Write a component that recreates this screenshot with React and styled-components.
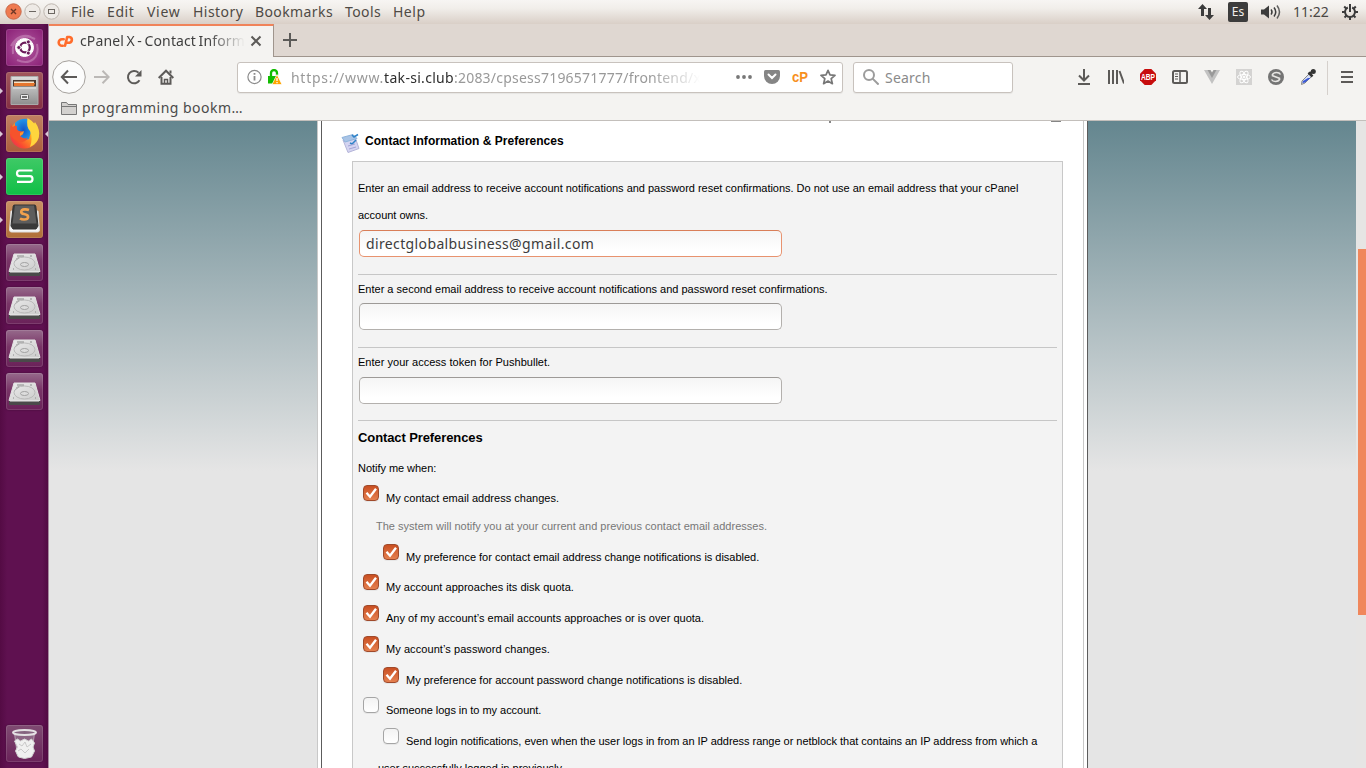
import React from "react";
import styled, { createGlobalStyle } from "styled-components";

const Global = createGlobalStyle`
  * { box-sizing: border-box; }
  body { margin: 0; overflow: hidden; background: #e5e5e5; }
  svg { display: block; flex: none; }
`;

const uiFont = `"Noto Sans", "Open Sans", sans-serif`;
const pageFont = `"Liberation Sans", Arial, sans-serif`;

const Desktop = styled.div`
  width: 1366px;
  height: 768px;
  display: flex;
  flex-direction: column;
  overflow: hidden;
  font-family: ${uiFont};
  font-size: 14px;
  color: #4a4744;
`;

const TopPanel = styled.header`
  height: 24px;
  flex: none;
  display: flex;
  align-items: center;
  justify-content: space-between;
  padding: 0 8px 0 5px;
  background: linear-gradient(#f7f5f3, #f1eeea 35%, #d9cfc7);
`;

const Group = styled.div`
  display: flex;
  align-items: center;
  gap: ${(p) => p.$gap || 0}px;
`;

const Menus = styled.div`
  display: flex;
  padding-left: 11px;
`;

const MenuItem = styled.span`
  width: ${(p) => p.$w}px;
  line-height: 22px;
  letter-spacing: ${(p) => p.$ls || 0}px;
  white-space: nowrap;
  color: #4f4a45;
`;

const Status = styled.div`
  display: flex;
  align-items: center;
  gap: 13px;
  padding-left: 13px;
`;

const Clock = styled.span`
  width: 36px;
  margin-left: -1px;
  line-height: 22px;
  letter-spacing: 0;
  white-space: nowrap;
`;

const Lang = styled.span`
  width: 20px;
  height: 20px;
  border-radius: 2px;
  background: #3c3c3c;
  color: #f1eeea;
  font-size: 12px;
  line-height: 20px;
  text-align: center;
`;

const Body = styled.div`
  flex: 1;
  min-height: 0;
  display: flex;
`;

const Launcher = styled.nav`
  width: 49px;
  flex: none;
  display: flex;
  flex-direction: column;
  gap: 6px;
  padding: 5px 0 6px;
  background: linear-gradient(90deg, #540b44, #5f1150 15%, #5f1150 88%, #520a43);
  border-right: 1px solid #a78aa0;
`;

const Slot = styled.div`
  display: flex;
  align-items: center;
  justify-content: space-between;
  height: 37px;
  ${(p) => p.$last && "margin-top: auto;"}
`;

const Pip = styled.i`
  width: 3px;
  border: 3px solid transparent;
  border-${(p) => p.$side}-width: 3px;
  border-${(p) => (p.$side === "left" ? "right" : "left")}-width: 0;
  border-${(p) => p.$side}-color: ${(p) => (p.$on ? "#d9c9d6" : "transparent")};
`;

const Tile = styled.div`
  width: 37px;
  height: 37px;
  border-radius: 3px;
  background: ${(p) => p.$bg};
  box-shadow: inset 0 0 0 1px rgba(255, 255, 255, 0.12), 0 0 2px rgba(0, 0, 0, 0.35);
`;

const Browser = styled.main`
  flex: 1;
  min-width: 0;
  display: flex;
  flex-direction: column;
  background: #f4f3f1;
`;

const TabStrip = styled.div`
  height: 33px;
  flex: none;
  display: flex;
  background: #dfd7d1;
  box-shadow: inset 0 -1px 0 #9f958d;
`;

const Tab = styled.div`
  width: 225px;
  display: flex;
  align-items: center;
  padding: 0 11px 1px 8px;
  background: #f4f3f1;
  border-top: 2px solid #f0835a;
  border-right: 1px solid #9f958d;
`;

const TabTitle = styled.span`
  flex: 1;
  margin: 0 5px 0 6px;
  overflow: hidden;
  white-space: nowrap;
  line-height: 24px;
  letter-spacing: 0.12px;
  word-spacing: -1.2px;
  color: #3f3f3f;
  mask-image: linear-gradient(90deg, #000 78%, transparent);
`;

const NewTab = styled.div`
  width: 32px;
  display: grid;
  place-items: center;
  padding-bottom: 1px;
`;

const Toolbar = styled.div`
  height: 41px;
  flex: none;
  display: flex;
  align-items: center;
  padding: 0 3px;
`;

const IconCell = styled.div`
  width: ${(p) => p.$w || 32}px;
  height: 40px;
  display: grid;
  place-items: center;
  padding-bottom: 1px;
`;

const Field = styled.div`
  width: ${(p) => p.$w}px;
  height: 31px;
  margin-left: ${(p) => p.$ml}px;
  display: flex;
  align-items: center;
  padding: 0 6px 1px 9px;
  background: #fff;
  border: 1px solid #c8c2bd;
  border-radius: 3px;
  box-shadow: 0 1px 1px rgba(0, 0, 0, 0.06);
`;

const Url = styled.span`
  flex: 1;
  min-width: 0;
  margin: 0 36px 0 8px;
  padding-top: 1px;
  overflow: hidden;
  white-space: nowrap;
  letter-spacing: 0.22px;
  line-height: 26px;
  color: #999;
  mask-image: linear-gradient(90deg, #000 88%, transparent);
  b { font-weight: 400; color: #2e2e2e; letter-spacing: 0.3px; }
`;

const Scheme = styled.span`
  letter-spacing: 0.72px;
`;

const SearchHint = styled.span`
  margin-left: 6px;
  padding-top: 1px;
  letter-spacing: 0.2px;
  color: #8a8a8a;
`;

const Divider = styled.div`
  width: 1px;
  height: 34px;
  margin: 0 3px;
  background: #d5d0cc;
`;

const Bookmarks = styled.div`
  height: 23px;
  flex: none;
  display: flex;
  align-items: center;
  gap: 5px;
  padding: 0 0 3px 12px;
  letter-spacing: 0.48px;
  line-height: 19px;
  border-bottom: 1px solid #c3bfbb;
  color: #4a4a4a;
`;

const Viewport = styled.section`
  flex: 1;
  min-height: 0;
  display: flex;
  overflow: hidden;
  background: #e5e5e5;
`;

const Backdrop = styled.div`
  width: 1307px;
  height: 647px;
  display: flex;
  justify-content: center;
  background: linear-gradient(#64868f, #e5e5e5 350px);
`;

const Scroll = styled.div`
  width: 10px;
  padding: 128px 0 0 2px;
  background: #e6e5e4;
`;

const Thumb = styled.div`
  height: 366px;
  background: #f0875c;
`;

const Frame = styled.div`
  width: 771px;
  height: 647px;
  padding: 0 3px;
  background: #fff;
  border-left: 1px solid #c8c8c8;
  border-right: 1px solid #5c5c5c;
`;

const Sheet = styled.div`
  height: 647px;
  padding: 0 20px 0 19px;
  border-left: 1px solid #5c5c5c;
  border-right: 1px solid #c8c8c8;
  font-family: ${pageFont};
  font-size: 11px;
  color: #000;
`;

const Cut = styled.div`
  height: 3px;
  display: flex;
  justify-content: flex-end;
  align-items: flex-start;
  gap: 220px;
  padding-right: 2px;
`;

const CutMark = styled.i`
  width: ${(p) => p.$w}px;
  height: ${(p) => p.$h}px;
  background: #858585;
`;

const Heading = styled.div`
  height: 37px;
  display: flex;
  align-items: center;
  gap: 5px;
  font-size: 12px;
  font-weight: 700;
  letter-spacing: 0.02px;
  span { padding-bottom: 4px; }
`;

const Panel = styled.div`
  height: 620px;
  margin-left: 11px;
  padding: 13px 5px 0;
  background: #f3f3f3;
  border: 1px solid #c8c8c8;
`;

const Prompt = styled.div`
  line-height: ${(p) => p.$lh}px;
  letter-spacing: ${(p) => p.$ls || 0}px;
  white-space: nowrap;
`;

const Input = styled.div`
  width: 423px;
  height: 27px;
  margin: ${(p) => p.$mt || 0}px 0 ${(p) => p.$mb}px 1px;
  padding: 0 6px;
  border: 1px solid ${(p) => (p.$focus ? "#e8936f" : "#b3b0ad")};
  border-top-color: ${(p) => (p.$focus ? "#d97e58" : "#9d9a97")};
  border-radius: 5px;
  background: linear-gradient(#f5f5f5, #fff 80%);
  font-family: ${uiFont};
  font-size: 14px;
  line-height: 25px;
  letter-spacing: 0.37px;
  color: #3c3c3c;
`;

const Rule = styled.div`
  height: 1px;
  background: #c6c6c6;
`;

const SubHead = styled.div`
  height: 34px;
  font-size: 13px;
  font-weight: 700;
  line-height: 34px;
  letter-spacing: -0.1px;
`;

const Notify = styled.div`
  height: 30px;
  line-height: 27px;
  letter-spacing: -0.04px;
`;

const Row = styled.div`
  height: ${(p) => p.$h}px;
  display: flex;
  align-items: flex-start;
  gap: 7px;
  padding-left: ${(p) => (p.$nested ? 25 : 5)}px;
  letter-spacing: ${(p) => p.$ls || 0}px;
  white-space: nowrap;
  span { line-height: 16px; padding-top: 5px; }
`;

const Note = styled.div`
  height: 29px;
  padding-left: 18px;
  line-height: 22px;
  letter-spacing: 0.012px;
  color: #777;
`;

const Box = styled.div`
  width: 16px;
  height: 16px;
  display: grid;
  place-items: center;
  border-radius: 4px;
  border: 1px solid ${(p) => (p.$on ? "#a04a2b" : "#a5a5a5")};
  background: ${(p) => (p.$on ? "linear-gradient(#c94f22, #e5804f)" : "linear-gradient(#f3f3f3, #fff)")};
  box-shadow: 0 1px 0 rgba(0, 0, 0, 0.05);
`;

const Overflow = styled.div`
  padding-left: 20px;
  line-height: 16px;
`;

const Icon = ({ w = 16, h = w, s = "#5c5a58", sw = 2, children, ...rest }) => (
  <svg width={w} height={h} viewBox={`0 0 ${w} ${h}`} fill="none" stroke={s} strokeWidth={sw} {...rest}>
    {children}
  </svg>
);

const CpLogo = ({ color }) => (
  <Icon w={17} h={13} s={color} sw={2.6} strokeLinecap="round" strokeLinejoin="round">
    <path d="M6.700 4.200H5a3.300 3.300 0 0 0 0 6.600h.8" />
    <path d="M8 10.800L10.200 2h2.300a2.900 2.900 0 0 1 0 5.700h-1.700" />
  </Icon>
);

const WindowButtons = () => (
  <Icon w={55} h={24} sw={1}>
    <circle cx="8.500" cy="11.500" r="7.700" fill="#ef7a50" stroke="#c9694a" />
    <path d="M6 9l5 5M11 9l-5 5" stroke="#6d3826" strokeWidth="1.400" />
    <circle cx="27.500" cy="11.500" r="7.700" fill="#eeeae6" stroke="#bdb5ae" />
    <path d="M24 11.500h7" stroke="#6c6762" strokeWidth="1" />
    <circle cx="46.500" cy="11.500" r="7.700" fill="#eeeae6" stroke="#bdb5ae" />
    <rect x="43.500" y="9.500" width="6" height="4" stroke="#6c6762" />
  </Icon>
);

const UbuntuArt = () => (
  <Icon w={37} h={37} sw={1}>
    <path d="M7 25C5 12 16 3 29 10M11 31C25 37 34 28 31 15M5 17C10 7 19 5 25 8" stroke="#d7a3cc" strokeWidth="2" opacity=".45" />
    <circle cx="18.500" cy="18.500" r="9" fill="#fff" stroke="#fff" />
    <circle cx="19" cy="18.500" r="4.800" stroke="#6b1b5b" strokeWidth="2.300" />
    <path d="M19 18.500h-7M19 18.500l3.500-6M19 18.500l3.500 6" stroke="#fff" strokeWidth="1.200" />
    <g fill="#6b1b5b" stroke="#fff" strokeWidth=".8">
      <circle cx="12.800" cy="18.500" r="2" /><circle cx="22.300" cy="12.900" r="2" /><circle cx="22.300" cy="24.100" r="2" />
    </g>
  </Icon>
);

const FilesArt = () => (
  <Icon w={37} h={37} sw={1}>
    <defs><linearGradient id="cab" x2="0" y2="1"><stop stopColor="#ddd" /><stop offset="1" stopColor="#8e8e8e" /></linearGradient></defs>
    <path d="M5 4.500h27v28H5z" fill="url(#cab)" stroke="#aaa" />
    <path d="M7 8h23v8H7z" fill="#4b3a30" stroke="none" />
    <path d="M8 9.500h20v1.500H8z" fill="#f7e3c6" stroke="none" />
    <path d="M8 11h21l-1 3H8z" fill="#e5762f" stroke="none" />
    <path d="M7 14.500h23v2.500H7z" fill="#d2d2d2" stroke="none" />
    <rect x="14.500" y="22.500" width="8" height="5" rx="1" fill="#eee" stroke="#666" />
    <path d="M16 25h5" stroke="#444" strokeWidth="1.500" />
  </Icon>
);

const FirefoxArt = () => (
  <Icon w={37} h={37} s="none">
    <defs>
      <linearGradient id="fx" x1="1" x2="0" y1="0" y2="1"><stop stopColor="#fff04b" /><stop offset=".4" stopColor="#ffab22" /><stop offset=".75" stopColor="#fb4a30" /><stop offset="1" stopColor="#d9226e" /></linearGradient>
      <radialGradient id="fb"><stop stopColor="#1456c8" /><stop offset="1" stopColor="#2396e8" /></radialGradient>
    </defs>
    <circle cx="18.500" cy="19" r="14.500" fill="url(#fx)" />
    <path d="M9 8Q14 3 22 4l4 9-3 11-7 2-7-8z" fill="url(#fb)" />
    <path d="M5 8q0 3 2 4 2-2 4-1-1 4 2 5l4 .5q1 3-3 4.500 4 4 8 1.500-4 7-11 3.500Q2 22 5 8z" fill="#f6532c" />
    <path d="M21.500 3q4 2 6.500 6l1-2q5 7 4 14-1 7-9 11 3-9 0-16Q20 12 21.500 3z" fill="#ffd53d" />
    <path d="M14 18l4-2-1 3-3 2z" fill="#ff982c" />
  </Icon>
);

const WpsArt = () => (
  <Icon w={37} h={37} s="#fff" sw={2.2} strokeLinejoin="round">
    <path d="M26.500 12.500H13.500q-2.500 0-2.500 2.800t2.500 2.800h10.500q2.500 0 2.500 2.900t-2.500 2.900H11" />
  </Icon>
);

const SublimeArt = () => (
  <Icon w={37} h={37} sw={1}>
    <path d="M5 10h27l1.500 19q0 2-2 2h-26q-2 0-2-2z" fill="#f6f6f6" stroke="#ddd" />
    <path d="M8.500 4h20q1 0 1.300 1L32 25l-2 3H7l-2-3L7.200 5q.3-1 1.300-1z" fill="#3a3a3a" stroke="#333" />
    <path d="M9 4.500h19l2.500 18h-24z" fill="#5d5d5d" stroke="none" />
    <path d="M23 9q-2-.8-4.500-.6c-4 .3-4.500 4-.5 4.600 6 1 5 5.500 0 5.500q-2.500 0-4-1" stroke="#f3a14c" strokeWidth="2.600" />
  </Icon>
);

const DiskArt = () => (
  <Icon w={37} h={37} sw={1}>
    <defs><linearGradient id="dk" x2="1" y2="1"><stop stopColor="#ededed" /><stop offset="1" stopColor="#cacaca" /></linearGradient></defs>
    <path d="M3 27h31v4q0 1-1 1H4q-1 0-1-1z" fill="#4a4a4a" stroke="none" />
    <path d="M8 10h21l5 17.500H3z" fill="url(#dk)" stroke="#e2e2e2" />
    <path d="M4 28.500h29" stroke="#999" />
    <ellipse cx="18.500" cy="19.500" rx="10.500" ry="6.500" stroke="#b9b9b9" />
    <ellipse cx="18.500" cy="20.500" rx="4" ry="2" fill="#ddd" stroke="#a2a2a2" />
    <path d="M11 12h7M24 12h2M7 25h1M29 25h1" stroke="#8a8a8a" />
    <path d="M10 15l5-3M9 17l4-3" stroke="#b0b0b0" />
  </Icon>
);

const TrashArt = () => (
  <Icon w={37} h={37} sw={1}>
    <path d="M8.500 8l3 23q7 3 14 0l3-23" fill="#8d6685" stroke="#b79fb2" />
    <path d="M8.500 16l3-2 3 2 4-2 4 2 3-2 3 4-1.500 4 1.500 4-3 6-7 1.500-6-1.500-3-6 2-4z" fill="#f0f0f0" stroke="#d2d2d2" />
    <path d="M13 19l3 2 3-4 2 5 4-3M12 26l3-2 4 4 4-4" stroke="#c9c9c9" />
    <ellipse cx="18.500" cy="7.500" rx="11.500" ry="2.600" fill="#866380" stroke="#e4e0e3" strokeWidth="2" />
  </Icon>
);

const purple = "radial-gradient(circle at 50% 50%, #b25ba0, #8a1f76)";
const glass = "linear-gradient(#966a8b, #793567 45%, #6a2259)";
const launchers = [
  { art: UbuntuArt, bg: purple },
  { art: FilesArt, bg: "linear-gradient(#a1575c, #842f43)", on: true },
  { art: FirefoxArt, bg: "linear-gradient(#c08062, #ac5e3d)", on: true, focus: true },
  { art: WpsArt, bg: "linear-gradient(#3fc966, #0fbf46)", on: true },
  { art: SublimeArt, bg: "linear-gradient(#c89064, #b06f38)", on: true },
  { art: DiskArt, bg: glass },
  { art: DiskArt, bg: glass },
  { art: DiskArt, bg: glass },
  { art: DiskArt, bg: glass },
  { art: TrashArt, bg: "linear-gradient(#7f4b72, #6a2259)", last: true },
];

const rows = [
  { on: true, h: 30, ls: 0.02, text: "My contact email address changes." },
  { note: "The system will notify you at your current and previous contact email addresses." },
  { on: true, nested: true, h: 30, ls: -0.02, text: "My preference for contact email address change notifications is disabled." },
  { on: true, h: 31, ls: 0.02, text: "My account approaches its disk quota." },
  { on: true, h: 31, ls: 0.015, text: "Any of my account’s email accounts approaches or is over quota." },
  { on: true, h: 31, ls: 0.07, text: "My account’s password changes." },
  { on: true, nested: true, h: 30, text: "My preference for account password change notifications is disabled." },
  { h: 31, ls: -0.04, text: "Someone logs in to my account." },
  { nested: true, h: 32, ls: -0.033, text: "Send login notifications, even when the user logs in from an IP address range or netblock that contains an IP address from which a" },
];

const menus = [["File", 36, 0.3], ["Edit", 40, 0.6], ["View", 46, 0.7], ["History", 62, 0.45], ["Bookmarks", 90, 0.4], ["Tools", 48, 0.4], ["Help", 40, 0.5]];

const ToolbarIcons = () => (
  <>
    <IconCell><Icon><path d="M8 0v11M3 6.500l5 5 5-5M2 15h12" /></Icon></IconCell>
    <IconCell><Icon><path d="M2 1v14M6 1v14M10 1v14M12.500 2L17 14.500" transform="translate(-1 0)" /></Icon></IconCell>
    <IconCell>
      <svg width="16" height="16" viewBox="0 0 16 16">
        <path d="M4.700 0h6.600L16 4.700v6.600L11.300 16H4.700L0 11.300V4.700z" fill="#c70d0d" />
        <text x="1" y="11" textLength="14" lengthAdjust="spacingAndGlyphs" fontFamily="Liberation Sans, sans-serif" fontWeight="700" fontSize="8.500" fill="#fff">ABP</text>
      </svg>
    </IconCell>
    <IconCell><Icon><rect x="1" y="2" width="14" height="12" rx="1.500" /><path d="M8 2v12" strokeWidth="1.500" /><path d="M3 5h3M3 7.500h3M3 10h3" strokeWidth="1" /></Icon></IconCell>
    <IconCell><Icon s="none"><path d="M0 1h4l4 7 4-7h4L8 15z" fill="#c2c2c2" /><path d="M3.500 1H6.500L8 3.600 9.500 1h3L8 9z" fill="#999" /></Icon></IconCell>
    <IconCell>
      <Icon sw={1} s="#fff">
        <path d="M0 0h16v16H0z" fill="#d4d3d2" stroke="none" />
        <ellipse cx="8" cy="8" rx="6.500" ry="2.500" /><ellipse cx="8" cy="8" rx="6.500" ry="2.500" transform="rotate(60 8 8)" /><ellipse cx="8" cy="8" rx="6.500" ry="2.500" transform="rotate(120 8 8)" />
        <circle cx="8" cy="8" r="1" fill="#fff" />
      </Icon>
    </IconCell>
    <IconCell><Icon><circle cx="8" cy="8" r="8" fill="#747474" stroke="none" /><path d="M4 6.500q1-3 4.500-3 3 0 4 2M12 9.500q-1 3-4.500 3-3 0-4-2" stroke="#e7e6e4" strokeWidth="1.500" /><path d="M4 6.500l8 3" stroke="#e7e6e4" strokeWidth="1.800" /></Icon></IconCell>
    <IconCell>
      <Icon sw={1}>
        <path d="M9 5l2.500 2.500-6.500 6.500-3.500 1.500L2 12z" fill="#d5ddf5" stroke="#888" />
        <path d="M8 9h2.500L5 13.500l-2.500.5.500-2z" fill="#3857d6" stroke="none" />
        <path d="M8.500 3.500l4 4M10 5l3-3.500" stroke="#333" strokeWidth="2.500" /><circle cx="13.300" cy="2.500" r="2.500" fill="#333" stroke="none" />
      </Icon>
    </IconCell>
  </>
);

export default function App() {
  return (
    <Desktop>
      <Global />
      <TopPanel>
        <Group>
          <WindowButtons />
          <Menus>
            {menus.map(([t, w, ls]) => <MenuItem key={t} $w={w} $ls={ls}>{t}</MenuItem>)}
          </Menus>
        </Group>
        <Group>
          <Icon w={18} h={18} s="none"><path d="M5.500 1L10 6H7v7H4V6H1zM12.500 17L17 12h-3V5h-3v7H8z" fill="#3c3c3c" /></Icon>
          <Status>
            <Lang>Es</Lang>
            <Icon w={20} h={18} s="#3c3c3c" sw={1.5}>
              <path d="M0 6.500h3l5-4v13l-5-4H0z" fill="#3c3c3c" stroke="none" />
              <path d="M10 6.500q2 2.500 0 5" /><path d="M13 4.500q3.500 4.500 0 9" /><path d="M16 2.500q5 6.500 0 13" opacity=".8" />
            </Icon>
            <Clock>11:22</Clock>
            <Icon s="#3c3c3c">
              <path d="M5.800 3.500a5 5 0 1 0 4.400 0" />
              <path d="M8 0v8" /><path d="M0 8h3M13 8h3M2.200 2.500l2 2M13.800 2.500l-2 2M2.500 13.500l2-2M13.500 13.500l-2-2M8 13v3" />
            </Icon>
          </Status>
        </Group>
      </TopPanel>
      <Body>
        <Launcher>
          {launchers.map(({ art: Art, bg, on, focus, last }, i) => (
            <Slot key={i} $last={last}>
              <Pip $side="left" $on={on} />
              <Tile $bg={bg}><Art /></Tile>
              <Pip $side="right" $on={focus} />
            </Slot>
          ))}
        </Launcher>
        <Browser>
          <TabStrip>
            <Tab>
              <CpLogo color="#ff6c2c" />
              <TabTitle>cPanel X - Contact Information &amp; Preferences</TabTitle>
              <Icon w={12}><path d="M1.500 1.500l9 9M10.500 1.500l-9 9" /></Icon>
            </Tab>
            <NewTab><Icon w={14}><path d="M7 0v14M0 7h14" /></Icon></NewTab>
          </TabStrip>
          <Toolbar>
            <IconCell $w={34}>
              <Icon w={34}><circle cx="17" cy="17" r="16.300" fill="#fcfcfc" stroke="#a5a19d" strokeWidth="1" /><path d="M25 17H10M16 10.500L9.800 17l6.200 6.500" /></Icon>
            </IconCell>
            <IconCell><Icon s="#bbb8b6"><path d="M0 8h14M8.500 1.800L14.700 8l-6.200 6.200" /></Icon></IconCell>
            <IconCell><Icon><path d="M13.500 11.300A6.200 6.200 0 1 1 12.500 3.700" /><path d="M15.500 1v6.500H9z" fill="#5c5a58" stroke="none" /></Icon></IconCell>
            <IconCell><Icon><path d="M.7 9L8 1.700 15.300 9" /><path d="M3.500 8v6.700h9V8" /><path d="M12.500 1.500v3" /><path d="M6.500 15v-4.500h3V15" strokeWidth="1.500" /></Icon></IconCell>
            <Field $w={606} $ml={55}>
              <Icon s="#8b8b8b" sw={1.2}><circle cx="7.500" cy="8" r="6.600" /><path d="M7.500 7v4.500M7.500 4v1.700" strokeWidth="1.800" /></Icon>
              <Icon w={20} h={16} s="none">
                <path d="M8 8V4a3 3 0 0 1 6 0v2.500" stroke="#12bc00" strokeWidth="2.300" />
                <path d="M5 7h9v7.500H5z" fill="#12bc00" />
                <path d="M14 5.500L19 15.500H9z" fill="#ffa500" stroke="#fff" strokeWidth=".7" strokeLinejoin="round" />
                <path d="M14 9v3M14 13v1.300" stroke="#fff" strokeWidth="1.300" />
              </Icon>
              <Url><Scheme>https://www.</Scheme><b>tak-si.club</b>:2083/cpsess7196571777/frontend/x3/contact</Url>
              <Group $gap={12}>
                <Icon s="none"><g fill="#777"><circle cx="2" cy="8" r="1.900" /><circle cx="8" cy="8" r="1.900" /><circle cx="14" cy="8" r="1.900" /></g></Icon>
                <Icon s="none"><path d="M1.500 1h13q1.500 0 1.500 1.500V7A8 8 0 0 1 0 7V2.500Q0 1 1.500 1z" fill="#858585" /><path d="M4.500 5.500L8 9l3.500-3.500" stroke="#fff" strokeWidth="2" strokeLinecap="round" /></Icon>
                <svg width="16" height="16" viewBox="0 0 16 16"><text x="0" y="12.500" textLength="16" lengthAdjust="spacingAndGlyphs" fontFamily="Liberation Sans, sans-serif" fontWeight="700" fontSize="14" fill="#f7901e">cP</text></svg>
                <Icon s="#777" sw={1.7}><path d="M8 1.300l2 4.600 5 .5-3.800 3.300 1.200 5L8 12.100l-4.400 2.600 1.200-5L1 6.400l5-.5z" strokeLinejoin="round" /></Icon>
              </Group>
            </Field>
            <Field $w={160} $ml={10}>
              <Icon s="#9c9c9c"><circle cx="6" cy="6" r="5" /><path d="M9.600 9.600l6 6" /></Icon>
              <SearchHint>Search</SearchHint>
            </Field>
            <IconCell $w={55} />
            <ToolbarIcons />
            <Divider />
            <IconCell><Icon><path d="M2 3h12M2 8h12M2 13h12" /></Icon></IconCell>
          </Toolbar>
          <Bookmarks>
            <Icon s="#777" sw={1}><path d="M.5 14.500v-12h5l1.500 2h8.500v10z" fill="#d3d1cf" /><path d="M.5 6.500h15" /></Icon>
            <span>programming bookm…</span>
          </Bookmarks>
          <Viewport>
            <Backdrop>
              <Frame>
                <Sheet>
                  <Cut><CutMark $w={2} $h={2} /><CutMark $w={10} $h={1} /></Cut>
                  <Heading>
                    <Icon w={19} h={20} sw={1}>
                      <path d="M2 7l12-3 4 11.500-11 4z" fill="#d4d4f1" stroke="#b4b4d8" />
                      <path d="M1 4.500L12 1.500l4 4L4 9z" fill="#a9c4e6" stroke="#8fb4dc" />
                      <path d="M11 2l2 2 4-2.500M9 10l2 1 4-4" stroke="#2f83c8" strokeWidth="1.500" />
                      <path d="M7 13l7-2M8 16l7-2" stroke="#a3a3d6" />
                    </Icon>
                    <span>Contact Information &amp; Preferences</span>
                  </Heading>
                  <Panel>
                    <Prompt $lh={27} $ls={-0.018}>
                      Enter an email address to receive account notifications and password reset confirmations. Do not use an email address that your cPanel<br />account owns.
                    </Prompt>
                    <Input $focus $mt={1} $mb={17}>directglobalbusiness@gmail.com</Input>
                    <Rule />
                    <Prompt $lh={28}>Enter a second email address to receive account notifications and password reset confirmations.</Prompt>
                    <Input $mb={17} />
                    <Rule />
                    <Prompt $lh={28} $ls={0.02}>Enter your access token for Pushbullet.</Prompt>
                    <Input $mt={1} $mb={16} />
                    <Rule />
                    <SubHead>Contact Preferences</SubHead>
                    <Notify>Notify me when:</Notify>
                    {rows.map((r, i) => r.note ? <Note key={i}>{r.note}</Note> : (
                      <Row key={i} $h={r.h} $nested={r.nested} $ls={r.ls}>
                        <Box $on={r.on}>
                          {r.on && <Icon w={14} s="#fff" sw={2.3}><path d="M2.500 6.800l3.500 4L12 2.800" /></Icon>}
                        </Box>
                        <span>{r.text}</span>
                      </Row>
                    ))}
                    <Overflow>user successfully logged in previously.</Overflow>
                  </Panel>
                </Sheet>
              </Frame>
            </Backdrop>
            <Scroll><Thumb /></Scroll>
          </Viewport>
        </Browser>
      </Body>
    </Desktop>
  );
}
